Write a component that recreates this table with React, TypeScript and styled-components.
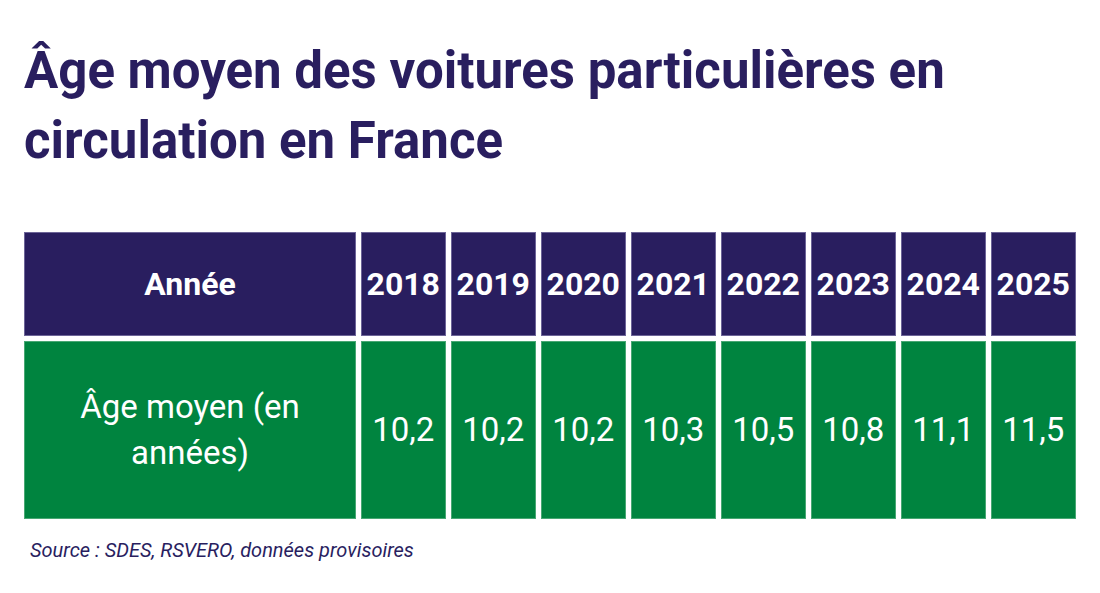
import React from 'react'
import styled, { createGlobalStyle } from 'styled-components'

const NAVY = '#291e5f'
const GREEN = '#00843f'

const years = ['2018', '2019', '2020', '2021', '2022', '2023', '2024', '2025']
const ages = ['10,2', '10,2', '10,2', '10,3', '10,5', '10,8', '11,1', '11,5']

const GlobalStyle = createGlobalStyle`
  html, body {
    margin: 0;
    padding: 0;
    background: #ffffff;
  }
  body {
    font-family: Roboto, "Liberation Sans", Arial, sans-serif;
  }
`

const Page = styled.div`
  width: 1100px;
  height: 593px;
  box-sizing: border-box;
  padding: 36px 24px 0 24px;
  background: #ffffff;
`

const Title = styled.h1`
  margin: 0;
  font-family: Roboto, "Liberation Sans", sans-serif;
  font-size: 51px;
  font-weight: 700;
  line-height: 70px;
  color: ${NAVY};
  width: 1000px;
`

const Table = styled.div`
  margin-top: 56px;
  width: 1052px;
  display: grid;
  grid-template-columns: 332px repeat(8, 1fr);
  grid-template-rows: 104px 178px;
  column-gap: 4.5px;
  row-gap: 5px;
`

const Cell = styled.div<{ $head?: boolean; $label?: boolean }>`
  display: flex;
  align-items: center;
  justify-content: center;
  text-align: center;
  background: ${p => (p.$head ? NAVY : GREEN)};
  box-shadow: inset 0 0 0 1px ${p => (p.$head ? 'rgba(190,186,220,0.45)' : 'rgba(160,210,180,0.45)')};
  color: #ffffff;
  font-family: Roboto, "Liberation Sans", sans-serif;
  font-size: ${p => (p.$head ? '32px' : '33px')};
  font-weight: ${p => (p.$head ? 700 : 400)};
  line-height: 46px;
  padding: ${p => (p.$label ? '0 40px' : '0')};
  white-space: ${p => (p.$label ? 'normal' : 'nowrap')};
`

const Source = styled.p`
  margin: 19px 0 0 6px;
  font-family: Roboto, "Liberation Sans", sans-serif;
  font-style: italic;
  font-size: 20px;
  line-height: 24px;
  color: ${NAVY};
`

const App: React.FC = () => {
  return (
    <Page>
      <GlobalStyle />
      <Title>Âge moyen des voitures particulières en circulation en France</Title>
      <Table>
        <Cell $head>Année</Cell>
        {years.map(y => (
          <Cell $head key={y}>{y}</Cell>
        ))}
        <Cell $label>Âge moyen (en années)</Cell>
        {ages.map((a, i) => (
          <Cell key={i}>{a}</Cell>
        ))}
      </Table>
      <Source>Source : SDES, RSVERO, données provisoires</Source>
    </Page>
  )
}

export default App
